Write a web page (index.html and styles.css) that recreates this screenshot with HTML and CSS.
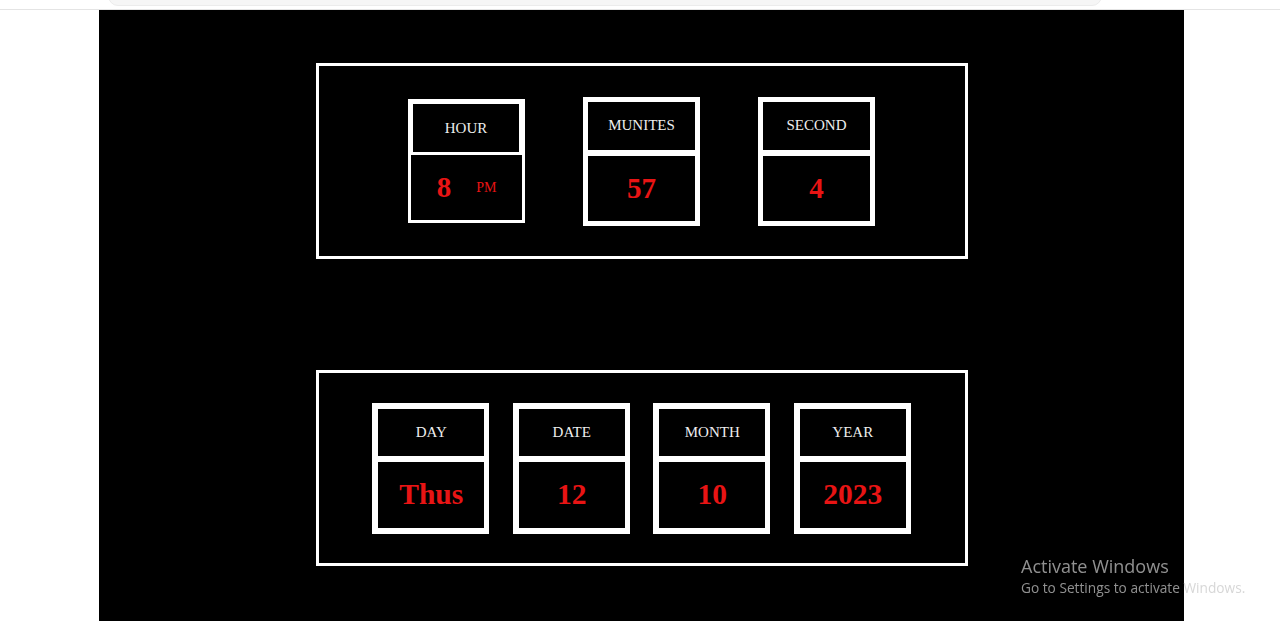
FILE: index.html
```html
<!DOCTYPE html>
<html lang="en">
<head>
<meta charset="utf-8">
<title>Digital Clock</title>
<link rel="stylesheet" href="styles.css">
</head>
<body>
<div class="topbar"><div class="tab"></div></div>
<main class="stage">
  <section class="panel">
    <div class="card card-hour">
      <div class="cell head">HOUR</div>
      <div class="cell value"><span>8</span><span class="ampm">PM</span></div>
    </div>
    <div class="card">
      <div class="cell head">MUNITES</div>
      <div class="cell value">57</div>
    </div>
    <div class="card">
      <div class="cell head">SECOND</div>
      <div class="cell value">4</div>
    </div>
  </section>
  <section class="panel panel-date">
    <div class="card card-date">
      <div class="cell head">DAY</div>
      <div class="cell value">Thus</div>
    </div>
    <div class="card card-date">
      <div class="cell head">DATE</div>
      <div class="cell value">12</div>
    </div>
    <div class="card card-date">
      <div class="cell head">MONTH</div>
      <div class="cell value">10</div>
    </div>
    <div class="card card-date">
      <div class="cell head">YEAR</div>
      <div class="cell value">2023</div>
    </div>
  </section>
</main>
<div class="watermark">
  <div class="wm-title">Activate Windows</div>
  <div class="wm-sub">Go to Settings to activate Windows.</div>
</div>
</body>
</html>
```
FILE: styles.css
```css
html, body {
  margin: 0;
  padding: 0;
  background: #ffffff;
  height: 630px;
  overflow: hidden;
}

.topbar {
  height: 9px;
  border-bottom: 1px solid #e4e4e4;
  position: relative;
  overflow: hidden;
}

.tab {
  margin: -12px 0 0 108px;
  width: 992px;
  height: 16px;
  border: 1px solid #ececec;
  border-radius: 0 0 10px 10px;
  background: #f6f6f6;
}

.stage {
  margin-left: 99px;
  width: 1085px;
  height: 611px;
  background: #000000;
  display: flex;
  flex-direction: column;
  align-items: center;
  gap: 111px;
  padding-top: 53px;
  box-sizing: border-box;
}

.panel {
  box-sizing: border-box;
  width: 652px;
  height: 196px;
  border: 3px solid #ffffff;
  display: flex;
  align-items: center;
  justify-content: center;
  gap: 58px;
}

.panel-date {
  height: 196px;
  gap: 23.5px;
}

.card {
  box-sizing: border-box;
  width: 117px;
  background: #ffffff;
  padding: 5px;
  display: flex;
  flex-direction: column;
  gap: 6px;
}

.card-hour {
  padding: 3px;
  gap: 3px;
}

.card-hour .head {
  margin: 2px 3px 0 2px;
}

.card-date {
  padding: 6px 5px 6px 6px;
}

.cell {
  background: #000000;
  display: flex;
  align-items: center;
  justify-content: center;
  font-family: "Liberation Serif", "Times New Roman", serif;
}

.head {
  height: 48px;
  color: #eeeeee;
  font-size: 15px;
}

.card-date .head {
  height: 47px;
}

.value {
  height: 65px;
  color: #e81414;
  font-size: 29px;
  font-weight: bold;
}

.card-date .value {
  height: 66px;
}

.card-date .value:first-child,
.card-date .value {
  font-size: 29.5px;
}

.card-hour .value {
  gap: 25px;
}

.ampm {
  font-size: 14px;
  font-weight: normal;
}

.watermark {
  position: fixed;
  left: 1021px;
  top: 556px;
  font-family: "Open Sans", "Noto Sans", sans-serif;
  color: rgba(200, 200, 200, 0.72);
  line-height: 1.2;
}

.wm-title {
  font-size: 18px;
}

.wm-sub {
  font-size: 13.7px;
  margin-top: 2px;
}
```
